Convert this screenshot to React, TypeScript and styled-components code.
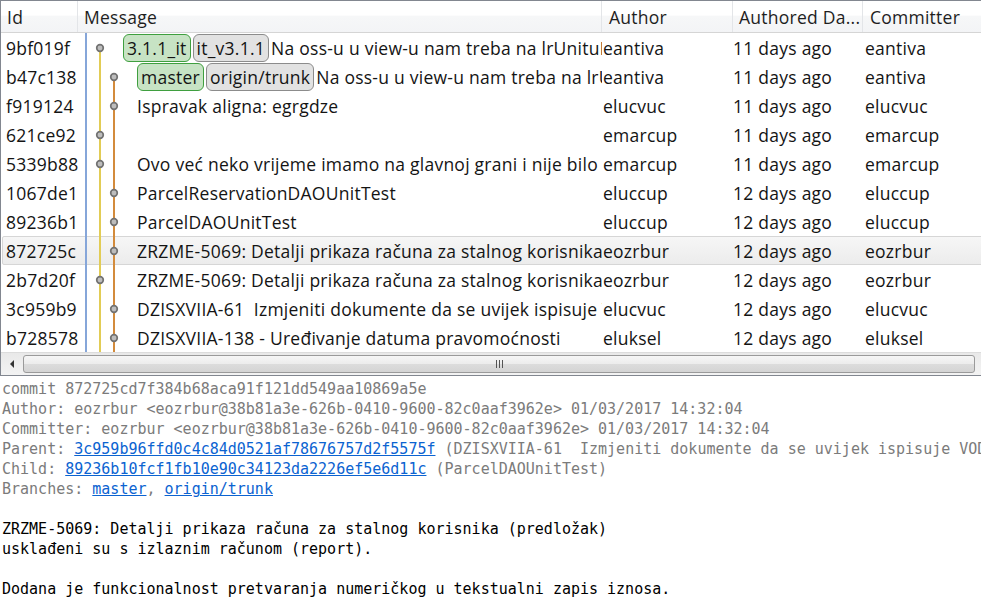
import React from "react";
import styled, { createGlobalStyle } from "styled-components";

const Global = createGlobalStyle`
  html, body { margin: 0; padding: 0; background: #fff; overflow: hidden; }
  body { width: 981px; height: 606px; }
`;

const UI_FONT = `"Open Sans", "Noto Sans", sans-serif`;
const MONO_FONT = `"DejaVu Sans Mono", "Liberation Mono", monospace`;
const COLS = "77px 524px 131px 130px 1fr";
const ROW_H = 29;
const LANE = 14;
const FS = "17.5px";
const LS = "0.25px";

const Page = styled.div`
  width: 981px;
  height: 606px;
  overflow: hidden;
  display: flex;
  flex-direction: column;
  font-family: ${UI_FONT};
`;

const Frame = styled.div`
  width: 1000px;
  border: 1px solid #828790;
  border-right: none;
  display: flex;
  flex-direction: column;
  background: #fff;
`;

const Header = styled.div`
  display: grid;
  grid-template-columns: ${COLS};
  height: 31px;
  border-bottom: 1px solid #d5d5d5;
  background: linear-gradient(#ffffff 0%, #ffffff 45%, #f6f7f8 50%, #f3f4f6 100%);
`;

const HeadCell = styled.div<{ $pad?: number }>`
  font-size: ${FS};
  letter-spacing: ${LS};
  color: #1e1e1e;
  line-height: 31px;
  padding-top: 1px;
  padding-left: ${(p) => p.$pad ?? 6}px;
  border-right: 1px solid #e3e5e8;
  white-space: nowrap;
  overflow: hidden;
`;

const Rows = styled.div`
  display: flex;
  flex-direction: column;
`;

const Row = styled.div<{ $selected?: boolean }>`
  position: relative;
  display: grid;
  grid-template-columns: ${COLS};
  height: ${ROW_H}px;
  &::before {
    content: "";
    display: ${(p) => (p.$selected ? "block" : "none")};
    position: absolute;
    left: 1px;
    right: 0;
    top: 0;
    bottom: 0;
    border: 1px solid #d6d6d6;
    border-radius: 2px;
    background: linear-gradient(#f6f6f6, #ececec);
    z-index: 0;
  }
  & > * {
    position: relative;
    z-index: 1;
  }
`;

const Cell = styled.div<{ $pad?: number }>`
  font-size: ${FS};
  letter-spacing: ${LS};
  color: #141414;
  line-height: ${ROW_H - 1}px;
  padding-left: ${(p) => p.$pad ?? 1}px;
  white-space: nowrap;
  overflow: hidden;
  display: flex;
  align-items: center;
`;

const MessageCell = styled.div`
  display: flex;
  align-items: stretch;
  overflow: hidden;
  white-space: pre;
  font-size: ${FS};
  letter-spacing: ${LS};
  color: #141414;
`;

const MsgText = styled.span`
  line-height: ${ROW_H - 1}px;
  align-self: center;
`;

const Badge = styled.span<{ $kind: "local" | "remote" }>`
  display: inline-flex;
  align-items: center;
  height: 28px;
  align-self: center;
  box-sizing: border-box;
  padding: 0 3px;
  margin-right: 2px;
  border-radius: 6px;
  border: 1px solid ${(p) => (p.$kind === "local" ? "#3f9f3f" : "#8c8c8c")};
  background: ${(p) => (p.$kind === "local" ? "#c7e3c4" : "#e2e2e2")};
  line-height: 26px;
`;

const Scrollbar = styled.div`
  height: 22px;
  display: flex;
  align-items: center;
  background: linear-gradient(#e9e9e9, #f3f3f3);
  border-top: 1px solid #dcdcdc;
`;

const ArrowButton = styled.div`
  width: 22px;
  height: 22px;
  display: flex;
  align-items: center;
  justify-content: center;
`;

const Thumb = styled.div`
  width: 952px;
  height: 18px;
  box-sizing: border-box;
  border: 1px solid #9a9a9a;
  border-radius: 3px;
  background: linear-gradient(#f6f6f6 0%, #ececec 50%, #dcdcdc 51%, #d4d4d4 100%);
  display: flex;
  align-items: center;
  justify-content: center;
`;

const Details = styled.div`
  padding: 3px 0 0 2px;
  font-family: ${MONO_FONT};
  font-size: 15px;
  line-height: 20px;
  white-space: pre;
  color: #000;
`;

const Meta = styled.div`
  color: #7b7b7b;
`;

const Link = styled.a`
  color: #0b63d1;
  text-decoration: underline;
`;

const Blank = styled.div`
  height: 20px;
`;

const BodyLine = styled.div`
  color: #000;
`;

type Lane = 0 | 1 | 2;
const LANE_COLORS = ["#86a6d9", "#e2cc55", "#d38b3c"];

interface Commit {
  id: string;
  lanes: number;
  dot: Lane;
  starts: Lane[];
  badges?: { label: string; kind: "local" | "remote" }[];
  message: string;
  author: string;
  date: string;
  selected?: boolean;
}

const commits: Commit[] = [
  {
    id: "9bf019f", lanes: 2, dot: 1, starts: [1],
    badges: [{ label: "3.1.1_it", kind: "local" }, { label: "it_v3.1.1", kind: "remote" }],
    message: "Na oss-u u view-u nam treba na lrUnituId",
    author: "eantiva", date: "11 days ago",
  },
  {
    id: "b47c138", lanes: 3, dot: 2, starts: [2],
    badges: [{ label: "master", kind: "local" }, { label: "origin/trunk", kind: "remote" }],
    message: "Na oss-u u view-u nam treba na lrUnituId",
    author: "eantiva", date: "11 days ago",
  },
  { id: "f919124", lanes: 3, dot: 2, starts: [], message: "Ispravak aligna: egrgdze", author: "elucvuc", date: "11 days ago" },
  { id: "621ce92", lanes: 3, dot: 1, starts: [], message: "", author: "emarcup", date: "11 days ago" },
  { id: "5339b88", lanes: 3, dot: 1, starts: [], message: "Ovo već neko vrijeme imamo na glavnoj grani i nije bilo", author: "emarcup", date: "11 days ago" },
  { id: "1067de1", lanes: 3, dot: 2, starts: [], message: "ParcelReservationDAOUnitTest", author: "eluccup", date: "12 days ago" },
  { id: "89236b1", lanes: 3, dot: 2, starts: [], message: "ParcelDAOUnitTest", author: "eluccup", date: "12 days ago" },
  { id: "872725c", lanes: 3, dot: 2, starts: [], message: "ZRZME-5069: Detalji prikaza računa za stalnog korisnika (predložak)", author: "eozrbur", date: "12 days ago", selected: true },
  { id: "2b7d20f", lanes: 3, dot: 1, starts: [], message: "ZRZME-5069: Detalji prikaza računa za stalnog korisnika (predložak)", author: "eozrbur", date: "12 days ago" },
  { id: "3c959b9", lanes: 3, dot: 2, starts: [], message: "DZISXVIIA-61  Izmjeniti dokumente da se uvijek ispisuje VOD", author: "elucvuc", date: "12 days ago" },
  { id: "b728578", lanes: 3, dot: 2, starts: [], message: "DZISXVIIA-138 - Uređivanje datuma pravomoćnosti", author: "eluksel", date: "12 days ago" },
];

const Graph: React.FC<{ c: Commit }> = ({ c }) => {
  const w = LANE * c.lanes + 17;
  const h = ROW_H;
  const mid = h / 2 + 0.5;
  const offX = (lane: number) => 8 + lane * LANE;
  return (
    <svg width={w} height={h} style={{ flex: "none" }}>
      {Array.from({ length: c.lanes }).map((_, i) => {
        const starts = c.starts.includes(i as Lane);
        return (
          <line
            key={i}
            x1={offX(i)}
            x2={offX(i)}
            y1={starts ? mid : 0}
            y2={h}
            stroke={LANE_COLORS[i]}
            strokeWidth={2}
          />
        );
      })}
      <circle cx={offX(c.dot)} cy={mid} r={3.3} fill="#bdbdbd" stroke="#727272" strokeWidth={1.7} />
    </svg>
  );
};

const GripIcon = () => (
  <svg width="9" height="8" viewBox="0 0 9 8">
    <line x1="1.5" y1="0" x2="1.5" y2="8" stroke="#555" strokeWidth="1" />
    <line x1="4.5" y1="0" x2="4.5" y2="8" stroke="#555" strokeWidth="1" />
    <line x1="7.5" y1="0" x2="7.5" y2="8" stroke="#555" strokeWidth="1" />
  </svg>
);

const LeftArrow = () => (
  <svg width="6" height="8" viewBox="0 0 6 8">
    <path d="M5 0 L1 4 L5 8 Z" fill="#333" />
  </svg>
);

export default function App() {
  return (
    <Page>
      <Global />
      <Frame>
        <Header>
          <HeadCell>Id</HeadCell>
          <HeadCell>Message</HeadCell>
          <HeadCell $pad={7}>Author</HeadCell>
          <HeadCell>Authored Da...</HeadCell>
          <HeadCell $pad={7}>Committer</HeadCell>
        </Header>
        <Rows>
          {commits.map((c) => (
            <Row key={c.id} $selected={c.selected}>
              <Cell $pad={5}>{c.id}</Cell>
              <MessageCell>
                <Graph c={c} />
                {c.badges?.map((b) => (
                  <Badge key={b.label} $kind={b.kind}>{b.label}</Badge>
                ))}
                <MsgText>{c.message}</MsgText>
              </MessageCell>
              <Cell>{c.author}</Cell>
              <Cell $pad={0}>{c.date}</Cell>
              <Cell $pad={2}>{c.author}</Cell>
            </Row>
          ))}
        </Rows>
        <Scrollbar>
          <ArrowButton>
            <LeftArrow />
          </ArrowButton>
          <Thumb>
            <GripIcon />
          </Thumb>
        </Scrollbar>
      </Frame>
      <Details>
        <Meta>commit 872725cd7f384b68aca91f121dd549aa10869a5e</Meta>
        <Meta>Author: eozrbur &lt;eozrbur@38b81a3e-626b-0410-9600-82c0aaf3962e&gt; 01/03/2017 14:32:04</Meta>
        <Meta>Committer: eozrbur &lt;eozrbur@38b81a3e-626b-0410-9600-82c0aaf3962e&gt; 01/03/2017 14:32:04</Meta>
        <Meta>
          Parent: <Link>3c959b96ffd0c4c84d0521af78676757d2f5575f</Link> (DZISXVIIA-61  Izmjeniti dokumente da se uvijek ispisuje VODU)
        </Meta>
        <Meta>
          Child: <Link>89236b10fcf1fb10e90c34123da2226ef5e6d11c</Link> (ParcelDAOUnitTest)
        </Meta>
        <Meta>
          Branches: <Link>master</Link>, <Link>origin/trunk</Link>
        </Meta>
        <Blank />
        <BodyLine>ZRZME-5069: Detalji prikaza računa za stalnog korisnika (predložak)</BodyLine>
        <BodyLine>usklađeni su s izlaznim računom (report).</BodyLine>
        <Blank />
        <BodyLine>Dodana je funkcionalnost pretvaranja numeričkog u tekstualni zapis iznosa.</BodyLine>
      </Details>
    </Page>
  );
}
